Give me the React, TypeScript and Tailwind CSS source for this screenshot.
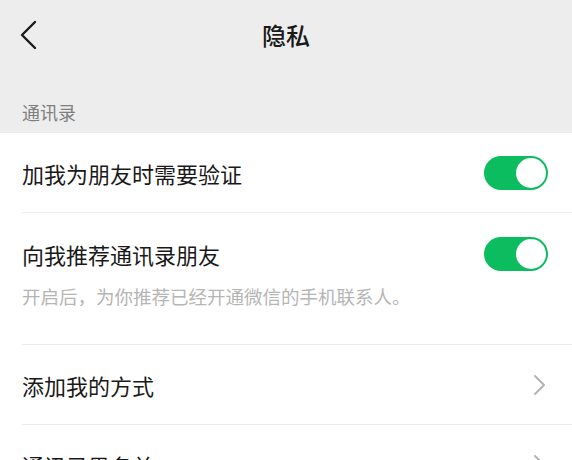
import React from "react";

const font = {
  fontFamily: '"Noto Sans CJK SC", "Noto Sans", sans-serif',
};

const Toggle: React.FC = () => (
  <div className="w-[64px] h-[34px] rounded-full bg-[#0bbd5f] flex items-center justify-end p-[2px]">
    <div className="w-[30px] h-[30px] rounded-full bg-white" />
  </div>
);

const Chevron: React.FC = () => (
  <svg width="14" height="22" viewBox="0 0 14 22" fill="none">
    <path
      d="M2 2 L11 11 L2 20"
      stroke="#b3b3b3"
      strokeWidth="2"
      strokeLinecap="round"
      strokeLinejoin="round"
    />
  </svg>
);

export default function App() {
  return (
    <div
      className="w-[572px] h-[460px] overflow-hidden bg-[#ededed] text-[#191919]"
      style={font}
    >
      {/* Nav bar */}
      <div className="h-[70px] grid grid-cols-[1fr_auto_1fr] items-center">
        <div className="pl-[19px] flex items-center">
          <svg width="20" height="30" viewBox="0 0 20 30" fill="none">
            <path
              d="M16 2 L3 15 L16 28"
              stroke="#1a1a1a"
              strokeWidth="2.4"
              strokeLinecap="round"
              strokeLinejoin="round"
            />
          </svg>
        </div>
        <div className="text-[24px] leading-[32px] font-medium">隐私</div>
        <div />
      </div>

      {/* Section label */}
      <div className="h-[63px] flex items-end pb-[8px] pl-[22px] text-[18px] leading-[26px] text-[#7f7f7f]">
        通讯录
      </div>

      {/* List */}
      <div className="bg-white">
        <div className="pl-[22px]">
          <div className="h-[80px] flex items-center justify-between pr-[24px] border-b border-[#ececec]">
            <span className="text-[22px] leading-[32px]">加我为朋友时需要验证</span>
            <Toggle />
          </div>
        </div>

        <div className="pl-[22px]">
          <div className="pt-[23px] pb-[34px] pr-[24px] border-b border-[#ececec]">
            <div className="h-[36px] flex items-center justify-between">
              <span className="text-[22px] leading-[32px]">向我推荐通讯录朋友</span>
              <Toggle />
            </div>
            <div className="mt-[11px] text-[18.5px] leading-[27px] text-[#b5b5b5]">
              开启后，为你推荐已经开通微信的手机联系人。
            </div>
          </div>
        </div>

        <div className="pl-[22px]">
          <div className="h-[80px] flex items-center justify-between pr-[25px] border-b border-[#ececec]">
            <span className="text-[22px] leading-[32px]">添加我的方式</span>
            <Chevron />
          </div>
        </div>

        <div className="pl-[22px]">
          <div className="h-[80px] flex items-center justify-between pr-[25px]">
            <span className="text-[22px] leading-[32px]">通讯录黑名单</span>
            <Chevron />
          </div>
        </div>
      </div>
    </div>
  );
}
